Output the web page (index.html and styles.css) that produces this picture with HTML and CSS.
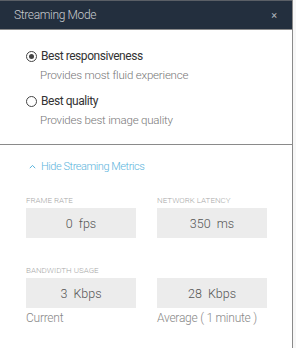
FILE: index.html
```html
<!DOCTYPE html>
<html>
<head>
<meta charset="utf-8">
<link rel="stylesheet" href="styles.css">
</head>
<body>
<div class="panel">
  <div class="header">
    <span class="title">Streaming Mode</span>
    <span class="close">×</span>
  </div>
  <div class="modes">
    <div class="option">
      <div class="opt-row">
        <span class="radio checked"></span>
        <span class="opt-label">Best responsiveness</span>
      </div>
      <div class="opt-desc">Provides most fluid experience</div>
    </div>
    <div class="option">
      <div class="opt-row">
        <span class="radio"></span>
        <span class="opt-label">Best quality</span>
      </div>
      <div class="opt-desc">Provides best image quality</div>
    </div>
  </div>
  <div class="metrics">
    <div class="toggle">
      <svg class="caret" width="7" height="5" viewBox="0 0 7 5"><path d="M0.8 4.2 L3.5 1.4 L6.2 4.2" fill="none" stroke="#5ab4dc" stroke-width="1"/></svg>
      <span>Hide Streaming Metrics</span>
    </div>
    <div class="grid">
      <div class="cell">
        <div class="label">FRAME RATE</div>
        <div class="value">0&nbsp; fps</div>
      </div>
      <div class="cell">
        <div class="label">NETWORK LATENCY</div>
        <div class="value">350&nbsp; ms</div>
      </div>
    </div>
    <div class="label bw">BANDWIDTH USAGE</div>
    <div class="grid">
      <div class="cell">
        <div class="value">3&nbsp; Kbps</div>
        <div class="caption">Current</div>
      </div>
      <div class="cell">
        <div class="value">28&nbsp; Kbps</div>
        <div class="caption">Average ( 1 minute )</div>
      </div>
    </div>
  </div>
</div>
</body>
</html>
```

FILE: styles.css
```css
html, body {
  margin: 0;
  padding: 0;
  background: #f7f7f7;
}
body {
  font-family: "Roboto", "Open Sans", sans-serif;
  width: 296px;
  height: 348px;
  overflow: hidden;
}
.panel {
  width: 292px;
  height: 348px;
  background: #fff;
  border-right: 1px solid #8a8a8a;
}
.header {
  height: 28px;
  background: #232f3e;
  border-top: 1px solid #5a5f66;
  border-bottom: 1px solid #8a8a8a;
  display: flex;
  align-items: center;
  justify-content: space-between;
  padding: 0 15px 0 14px;
}
.title {
  color: #c9ccd0;
  font-size: 12px;
  font-weight: 300;
  letter-spacing: -0.35px;
}
.close {
  color: #b0b5bb;
  font-size: 11px;
}
.modes {
  padding: 17px 0 14px 26px;
  border-bottom: 1px solid #8a8a8a;
}
.option {
  margin-bottom: 7px;
}
.option:last-child { margin-bottom: 0; }
.opt-row {
  display: flex;
  align-items: center;
  height: 18px;
}
.radio {
  width: 9px;
  height: 9px;
  border: 1px solid #444;
  border-radius: 50%;
  margin-right: 4px;
  position: relative;
}
.radio.checked::after {
  content: "";
  position: absolute;
  left: 2px;
  top: 2px;
  width: 5px;
  height: 5px;
  border-radius: 50%;
  background: #444;
}
.opt-label {
  color: #333;
  font-size: 12px;
  letter-spacing: -0.45px;
}
.opt-desc {
  color: #777;
  font-size: 11.5px;
  font-weight: 300;
  letter-spacing: -0.2px;
  padding-left: 14px;
  height: 20px;
  line-height: 20px;
}
.metrics {
  padding: 13px 0 0 26px;
}
.toggle {
  display: flex;
  align-items: center;
  color: #5ab4dc;
  font-size: 11px;
  font-weight: 300;
  letter-spacing: -0.45px;
  height: 16px;
  margin-bottom: 20px;
}
.caret {
  margin: 0 5px 0 3px;
}
.grid {
  display: grid;
  grid-template-columns: 110px 110px;
  column-gap: 21px;
}
.label {
  color: #a8a8a8;
  font-size: 8px;
  font-weight: 300;
  height: 13px;
  line-height: 13px;
  margin-bottom: 1px;
}
.label.bw {
  margin-top: 26px;
}
.value {
  height: 30px;
  background: #ececec;
  color: #555;
  font-size: 12.5px;
  font-weight: 300;
  display: flex;
  align-items: center;
  justify-content: center;
}
.caption {
  color: #888;
  font-size: 12px;
  font-weight: 300;
  letter-spacing: -0.25px;
  height: 20px;
  line-height: 20px;
}
```
